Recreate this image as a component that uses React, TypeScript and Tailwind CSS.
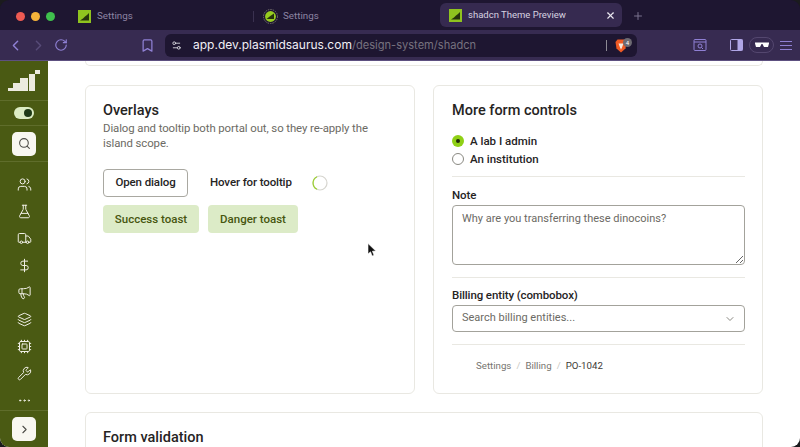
import {
  Bookmark,
  ChevronDown,
  ChevronLeft,
  ChevronRight,
  Cpu,
  DollarSign,
  Ellipsis,
  FlaskConical,
  Layers,
  Megaphone,
  Plus,
  RotateCw,
  Search,
  Settings2,
  Truck,
  Users,
  Wrench,
  X,
} from 'lucide-react'

const navIcons = [Users, FlaskConical, Truck, DollarSign, Megaphone, Layers, Cpu, Wrench, Ellipsis]

function Favicon() {
  return (
    <svg width="13" height="13" viewBox="0 0 13 13" className="shrink-0">
      <rect width="13" height="13" fill="#8fc31f" />
      <path d="M2 10.5 L5 8.5 L7 6.5 L9 5 L11 3 L11 10.5 Z" fill="#26330c" />
    </svg>
  )
}

function RoundFavicon() {
  return (
    <svg width="15" height="15" viewBox="0 0 15 15" className="shrink-0">
      <circle cx="7.5" cy="7.5" r="7" fill="none" stroke="#77736f" strokeDasharray="1.5 1" />
      <circle cx="7.5" cy="7.5" r="5.4" fill="#97cc20" />
      <path d="M3.5 10 L6 8 L8 6.5 L11 4.5 L11 10 Z" fill="#26330c" />
    </svg>
  )
}

function Logo() {
  return (
    <svg width="32" height="21" viewBox="0 0 32 21">
      <path d="M0 18h5v3H0z M5 13h7v8H5z M12 8h8v13h-8z M21 4h6v17h-6z M27 0h5v4h-5z" fill="#ecebdf" />
    </svg>
  )
}

function BraveIcon() {
  return (
    <svg width="12" height="14" viewBox="0 0 12 14" className="mt-[1px] shrink-0">
      <path d="M2.5 0.5h7l2 2.5-1 6.5L6 13.5 1.500 9.500.5 3z" fill="#ef5a24" />
      <path d="M3.500 4.500h5L7 8.500 6 10.500 5 8.500z" fill="#f7e8dc" />
    </svg>
  )
}

function Divider() {
  return <div className="h-px bg-[#e9e8e2]" />
}

function Field({ label, children }: { label: string; children: React.ReactNode }) {
  return (
    <div>
      <div className="text-[11.500px] leading-[15px] font-medium tracking-[-0.01em] text-[#26241f]">{label}</div>
      <div className="mt-[2px]">{children}</div>
    </div>
  )
}

export default function App() {
  return (
    <div className="h-[447px] w-[800px] overflow-hidden bg-[#1b1b1e] font-['Roboto',sans-serif]">
      <div className="flex h-full w-full flex-col overflow-hidden rounded-[9px]">
        {/* tab strip */}
        <div className="flex h-[30px] shrink-0 items-center bg-[#1e1631] pt-[2px] text-[9.800px] text-[#8c84a3]">
          <div className="ml-[16px] flex w-[59px] shrink-0 gap-[6px]">
            <span className="size-[9px] rounded-full bg-[#ed5a52]" />
            <span className="size-[9px] rounded-full bg-[#f5b33a]" />
            <span className="size-[9px] rounded-full bg-[#3fc04d]" />
          </div>
          <div className="ml-[3px] flex w-[175px] shrink-0 items-center gap-[6px]">
            <Favicon />
            <span>Settings</span>
          </div>
          <div className="h-[11px] w-px bg-[#3a3150]" />
          <div className="ml-[9px] flex w-[177px] shrink-0 items-center gap-[5px]">
            <RoundFavicon />
            <span>Settings</span>
          </div>
          <div className="-mt-[2px] flex h-[24px] w-[182px] shrink-0 items-center gap-[6px] rounded-[6px] bg-[#362a50] pr-[6px] pl-[9px] text-[9.500px] text-[#d6d2e0]">
            <Favicon />
            <span className="flex-1">shadcn Theme Preview</span>
            <X size={11} strokeWidth={2.5} className="text-[#e8e6ee]" />
          </div>
          <Plus size={12} className="ml-[10px] text-[#7a728f]" />
        </div>

        {/* toolbar */}
        <div className="flex h-[31px] shrink-0 items-center border-b border-[#5d5080] bg-[#372b51] text-[#8f80d4]">
          <ChevronLeft size={17} className="ml-[7px]" />
          <ChevronRight size={17} className="ml-[6px] text-[#574b78]" />
          <RotateCw size={14} className="ml-[7px]" />
          <Bookmark size={15} className="ml-[72px]" />
          <div className="ml-[10px] flex h-[23px] w-[472px] shrink-0 items-center rounded-[6px] bg-[#1e1631] pr-[5px] pl-[6px]">
            <Settings2 size={11} className="text-[#d8d6de]" />
            <div className="ml-[11px] flex-1 font-['Inter',sans-serif] text-[12px] text-[#f1eff5]">
              app.dev.plasmidsaurus.com<span className="text-[11.100px] text-[#77727f]">/design-system/shadcn</span>
            </div>
            <div className="h-[11px] w-px bg-[#8d8a94]" />
            <div className="ml-[8px] flex items-start">
              <BraveIcon />
              <span className="-ml-[4px] flex size-[9px] items-center justify-center rounded-full bg-[#6d6a72] text-[6px] text-white">
                4
              </span>
            </div>
          </div>
          <svg width="14" height="12" viewBox="0 0 14 12" className="ml-[56px]" fill="none" stroke="currentColor">
            <rect x="1" y="0.500" width="12" height="11" rx="1" />
            <path d="M1 3h12" />
            <circle cx="7" cy="7" r="2" />
            <path d="M8.500 8.500l1.500 1.500" />
          </svg>
          <svg width="13" height="12" viewBox="0 0 13 12" className="ml-[23px]">
            <rect x="0.500" y="0.500" width="12" height="11" rx="1" fill="none" stroke="#b0a6e6" />
            <rect x="7.500" y="0.500" width="5" height="11" fill="#b0a6e6" />
          </svg>
          <div className="ml-[6px] flex h-[16px] w-[25px] items-center justify-center rounded-full border border-[#54476f]">
            <svg width="14" height="6" viewBox="0 0 14 6" fill="#ffffff">
              <path d="M0 0.500h14v1l-1 3.500h-4L7.500 2 6.500 2 5 5H1L0 1.500z" />
            </svg>
          </div>
          <div className="ml-[6px] flex w-[12px] flex-col gap-[3px]">
            <span className="h-px bg-[#8f80d4]" />
            <span className="h-px bg-[#8f80d4]" />
            <span className="h-px bg-[#8f80d4]" />
          </div>
        </div>

        {/* page */}
        <div className="flex min-h-0 flex-1 bg-white">
          <aside className="flex w-[48px] shrink-0 flex-col bg-[#4a5a13] text-[#efeee4]">
            <div className="flex h-[40px] shrink-0 items-center justify-center border-b border-[#5f6d2b]">
              <Logo />
            </div>
            <div className="flex h-[25px] shrink-0 items-center justify-center border-b border-[#5f6d2b]">
              <div className="flex h-[12px] w-[20px] items-center justify-end rounded-full bg-[#dcecc4] pr-[2px]">
                <span className="size-[8px] rounded-full bg-[#1f3a16]" />
              </div>
            </div>
            <div className="flex h-[36px] shrink-0 items-center justify-center border-b border-[#5f6d2b]">
              <div className="flex size-[24px] items-center justify-center rounded-[5px] bg-[#f8f7f1]">
                <Search size={13} className="text-[#4d4c47]" />
              </div>
            </div>
            <div className="flex flex-1 flex-col items-center gap-[12px] pt-[15px]">
              {navIcons.map((Icon, i) => (
                <Icon key={i} size={15} strokeWidth={1.6} />
              ))}
            </div>
            <div className="flex h-[37px] shrink-0 items-center justify-center border-t border-[#5f6d2b]">
              <div className="flex size-[24px] items-center justify-center rounded-[5px] bg-[#f8f7f1]">
                <ChevronRight size={13} className="text-[#4d4c47]" />
              </div>
            </div>
          </aside>

          <main className="relative flex min-w-0 flex-1 flex-col overflow-hidden px-[37px]">
            <div className="h-[5px] shrink-0 rounded-b-[6px] border-x border-b border-[#e9e8e2]" />

            <div className="mt-[19px] flex h-[309px] shrink-0 gap-[18px]">
              <section className="flex-1 rounded-[6px] border border-[#e9e8e2] pt-[16px] pr-[18px] pl-[17px]">
                <h2 className="text-[14.500px] leading-[18px] font-medium text-[#26241f]">Overlays</h2>
                <p className="mt-[1px] text-[11.400px] leading-[15px] tracking-[-0.09px] text-[#6c6a64]">
                  Dialog and tooltip both portal out, so they re-apply the island scope.
                </p>
                <div className="mt-[18px] flex items-center">
                  <button className="h-[28px] w-[85px] rounded-[4px] border border-[#a9a8a1] text-[11.500px] font-medium tracking-[-0.01em] text-[#26241f]">
                    Open dialog
                  </button>
                  <span className="ml-[22px] text-[11.500px] font-medium tracking-[-0.01em] text-[#26241f]">
                    Hover for tooltip
                  </span>
                  <svg width="16" height="16" viewBox="0 0 16 16" fill="none" className="ml-[20px]">
                    <circle cx="8" cy="8" r="7" stroke="#d6d5cf" strokeWidth="1.200" />
                    <path d="M5 1.700A7 7 0 0 0 5 14.300" stroke="#9bd12e" strokeWidth="1.200" />
                  </svg>
                </div>
                <div className="mt-[8px] flex gap-[9px]">
                  <button className="h-[28px] w-[96px] rounded-[4px] bg-[#dcebc7] pt-[1px] text-[11.500px] font-medium text-[#47560f]">
                    Success toast
                  </button>
                  <button className="h-[28px] w-[90px] rounded-[4px] bg-[#dcebc7] pt-[1px] text-[11.500px] font-medium text-[#47560f]">
                    Danger toast
                  </button>
                </div>
              </section>

              <section className="flex-1 rounded-[6px] border border-[#e9e8e2] pt-[16px] pr-[17px] pl-[18px]">
                <h2 className="text-[14.500px] leading-[18px] font-medium text-[#26241f]">More form controls</h2>
                <div className="mt-[15px] flex flex-col gap-[6px] text-[11.500px] leading-[12px] font-medium text-[#26241f]">
                  <div className="flex items-center gap-[6px]">
                    <span className="flex size-[12px] items-center justify-center rounded-full bg-[#8fd016]">
                      <span className="size-[4px] rounded-full bg-[#1f2a0a]" />
                    </span>
                    A lab I admin
                  </div>
                  <div className="flex items-center gap-[6px]">
                    <span className="size-[12px] rounded-full border border-[#8a8982]" />
                    An institution
                  </div>
                </div>
                <div className="mt-[11px]">
                  <Divider />
                </div>
                <div className="mt-[11px]">
                  <Field label="Note">
                    <textarea
                      placeholder="Why are you transferring these dinocoins?"
                      className="block h-[60px] w-full rounded-[4px] border border-[#a3a29b] px-[9px] py-[5px] text-[11px] leading-[15px] outline-none placeholder:text-[#6c6a64]"
                    />
                  </Field>
                </div>
                <div className="mt-[12px]">
                  <Divider />
                </div>
                <div className="mt-[10px]">
                  <Field label="Billing entity (combobox)">
                    <div className="flex h-[27px] items-center justify-between rounded-[4px] border border-[#a3a29b] pr-[8px] pl-[9px] text-[11px] text-[#6c6a64]">
                      Search billing entities...
                      <ChevronDown size={12} className="text-[#8a8982]" />
                    </div>
                  </Field>
                </div>
                <div className="mt-[12px]">
                  <Divider />
                </div>
                <div className="mt-[15px] flex items-center gap-[5px] pl-[24px] text-[9.700px] leading-[12px] text-[#77756f]">
                  <span>Settings</span>
                  <span className="text-[#c9c8c2]">/</span>
                  <span>Billing</span>
                  <span className="text-[#c9c8c2]">/</span>
                  <span className="text-[#3d3b36]">PO-1042</span>
                </div>
              </section>
            </div>

            <section className="mt-[18px] h-[80px] shrink-0 rounded-[6px] border border-[#e9e8e2] pt-[16px] pr-[18px] pl-[17px]">
              <h2 className="text-[14.500px] leading-[18px] font-medium text-[#26241f]">Form validation</h2>
            </section>

            {/* mouse pointer over the page */}
            <svg width="10" height="14" viewBox="0 0 10 14" className="absolute top-[182px] left-[319px]">
              <path d="M1 0.500 L1 11 L3.500 8.800 L5.200 13 L7 12.200 L5.400 8.200 L8.800 8 Z" fill="#111" stroke="#fff" strokeWidth="0.600" />
            </svg>
          </main>
        </div>
      </div>
    </div>
  )
}
